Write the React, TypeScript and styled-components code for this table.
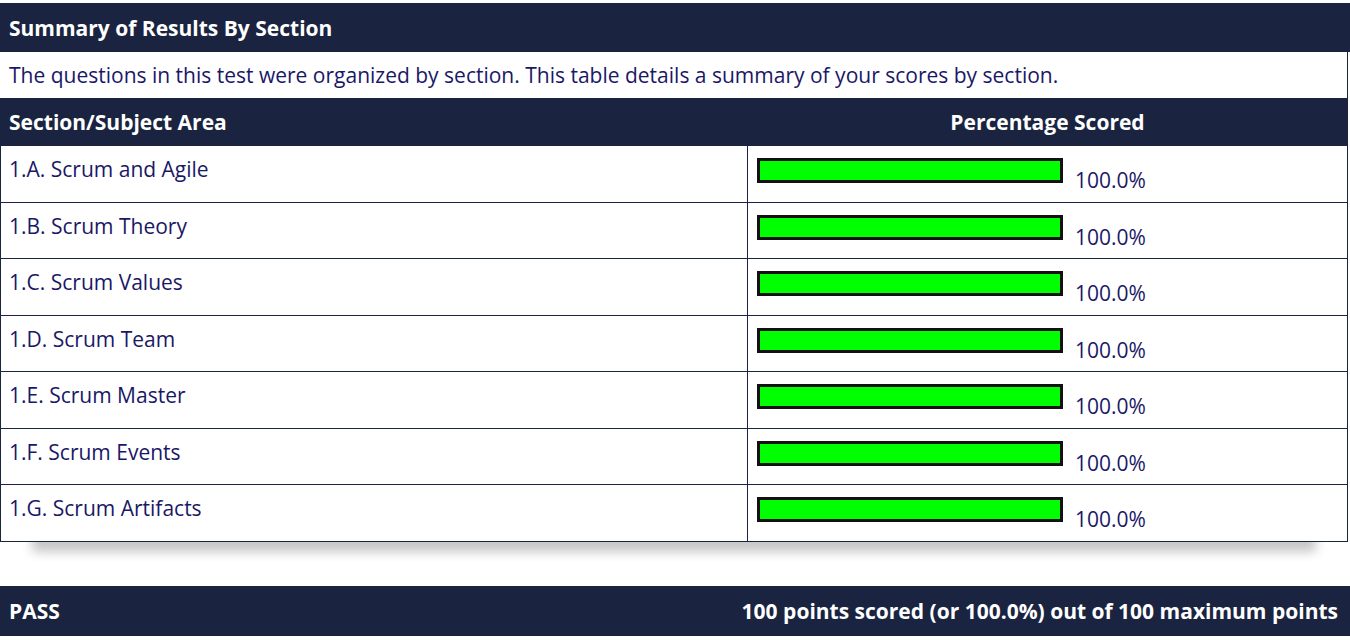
import styled, { createGlobalStyle } from 'styled-components'

const sections = [
  '1.A. Scrum and Agile',
  '1.B. Scrum Theory',
  '1.C. Scrum Values',
  '1.D. Scrum Team',
  '1.E. Scrum Master',
  '1.F. Scrum Events',
  '1.G. Scrum Artifacts',
]

export default function App() {
  return (
    <>
      <GlobalStyle />
      <Page>
        <Table>
          <TitleBar>Summary of Results By Section</TitleBar>
          <Intro>
            The questions in this test were organized by section. This table details a summary of your scores by section.
          </Intro>
          <HeadRow>
            <HeadCell>Section/Subject Area</HeadCell>
            <HeadCell center>Percentage Scored</HeadCell>
          </HeadRow>
          {sections.map((name) => (
            <Row key={name}>
              <Label>{name}</Label>
              <ScoreCell>
                <Bar>
                  <Fill style={{ width: '100%' }} />
                </Bar>
                <Percent>100.0%</Percent>
              </ScoreCell>
            </Row>
          ))}
        </Table>
        <ResultBar>
          <span>PASS</span>
          <span>100 points scored (or 100.0%) out of 100 maximum points</span>
        </ResultBar>
      </Page>
    </>
  )
}

const GlobalStyle = createGlobalStyle`
  body {
    margin: 0;
    background: #ffffff;
    font-family: "Open Sans", "Noto Sans", sans-serif;
  }
`

const navy = '#1a2440'
const ink = '#1a1866'

const Page = styled.div`
  width: 1350px;
  padding-top: 3px;
  display: flex;
  flex-direction: column;
  gap: 44px;
`

const Table = styled.div`
  width: 1348px;
  display: flex;
  flex-direction: column;
  box-shadow: 0 42px 10px -32px rgba(0, 0, 0, 0.22);
`

const TitleBar = styled.div`
  height: 49px;
  width: 1350px;
  box-sizing: border-box;
  padding: 0 9px;
  display: flex;
  align-items: center;
  background: ${navy};
  color: #ffffff;
  font-weight: 700;
  font-size: 21px;
`

const Intro = styled.div`
  height: 46px;
  box-sizing: border-box;
  padding: 0 9px;
  display: flex;
  align-items: center;
  color: ${ink};
  font-size: 21px;
  background: #ffffff;
  border-right: 1px solid ${navy};
`

const HeadRow = styled.div`
  height: 48px;
  display: grid;
  grid-template-columns: 747px 1fr;
  background: ${navy};
  color: #ffffff;
  font-weight: 700;
  font-size: 21px;
`

const HeadCell = styled.div<{ center?: boolean }>`
  padding: 0 9px;
  display: flex;
  align-items: center;
  justify-content: ${(p) => (p.center ? 'center' : 'flex-start')};
`

const Row = styled.div`
  height: 56.5px;
  box-sizing: border-box;
  display: grid;
  grid-template-columns: 747px 1fr;
  border-left: 1px solid ${navy};
  border-right: 1px solid ${navy};
  border-bottom: 1px solid ${navy};
  background: #ffffff;
  color: ${ink};
  font-size: 21px;
`

const Label = styled.div`
  padding: 9px 8px;
  line-height: 28px;
  border-right: 1px solid ${navy};
`

const ScoreCell = styled.div`
  padding: 12px 10px 0 9px;
  display: flex;
  align-items: flex-start;
`

const Bar = styled.div`
  width: 306px;
  height: 25px;
  box-sizing: border-box;
  border: 3px solid #111111;
  background: #ffffff;
`

const Fill = styled.div`
  height: 100%;
  background: #00ff00;
`

const Percent = styled.span`
  margin-left: 12px;
  margin-top: 8px;
  line-height: 28px;
`

const ResultBar = styled.div`
  height: 50px;
  width: 1350px;
  box-sizing: border-box;
  padding: 0 12px 0 9px;
  display: flex;
  align-items: center;
  justify-content: space-between;
  background: ${navy};
  color: #ffffff;
  font-weight: 700;
  font-size: 21px;
`
